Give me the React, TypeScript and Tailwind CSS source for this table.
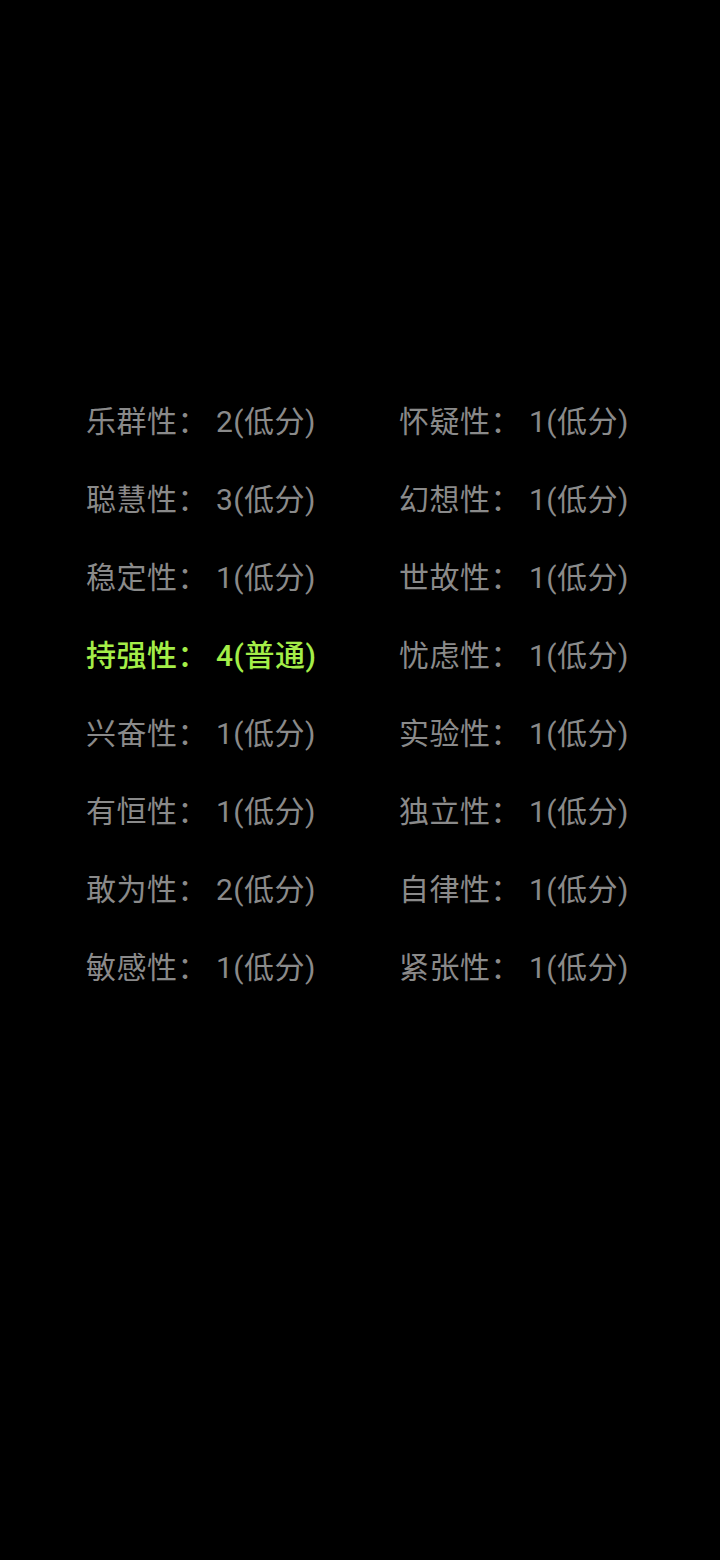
import React from 'react';

const rows: [string, string, boolean?][] = [
  ['乐群性： 2(低分)', '怀疑性： 1(低分)'],
  ['聪慧性： 3(低分)', '幻想性： 1(低分)'],
  ['稳定性： 1(低分)', '世故性： 1(低分)'],
  ['持强性： 4(普通)', '忧虑性： 1(低分)', true],
  ['兴奋性： 1(低分)', '实验性： 1(低分)'],
  ['有恒性： 1(低分)', '独立性： 1(低分)'],
  ['敢为性： 2(低分)', '自律性： 1(低分)'],
  ['敏感性： 1(低分)', '紧张性： 1(低分)'],
];

export default function App() {
  return (
    <div
      className="w-[720px] h-[1560px] bg-black pt-[382px] pl-[86px]"
      style={{ fontFamily: 'Roboto, "Noto Sans CJK SC", sans-serif' }}
    >
      {rows.map(([left, right, hi], i) => (
        <div key={i} className="grid grid-cols-[313px_1fr] h-[78px] items-center text-[30px] tracking-[0.5px] whitespace-pre">
          <span className={hi ? 'text-[#a4ee48] font-medium' : 'text-[#8a8a8a]'}>{left}</span>
          <span className="text-[#8a8a8a]">{right}</span>
        </div>
      ))}
    </div>
  );
}
